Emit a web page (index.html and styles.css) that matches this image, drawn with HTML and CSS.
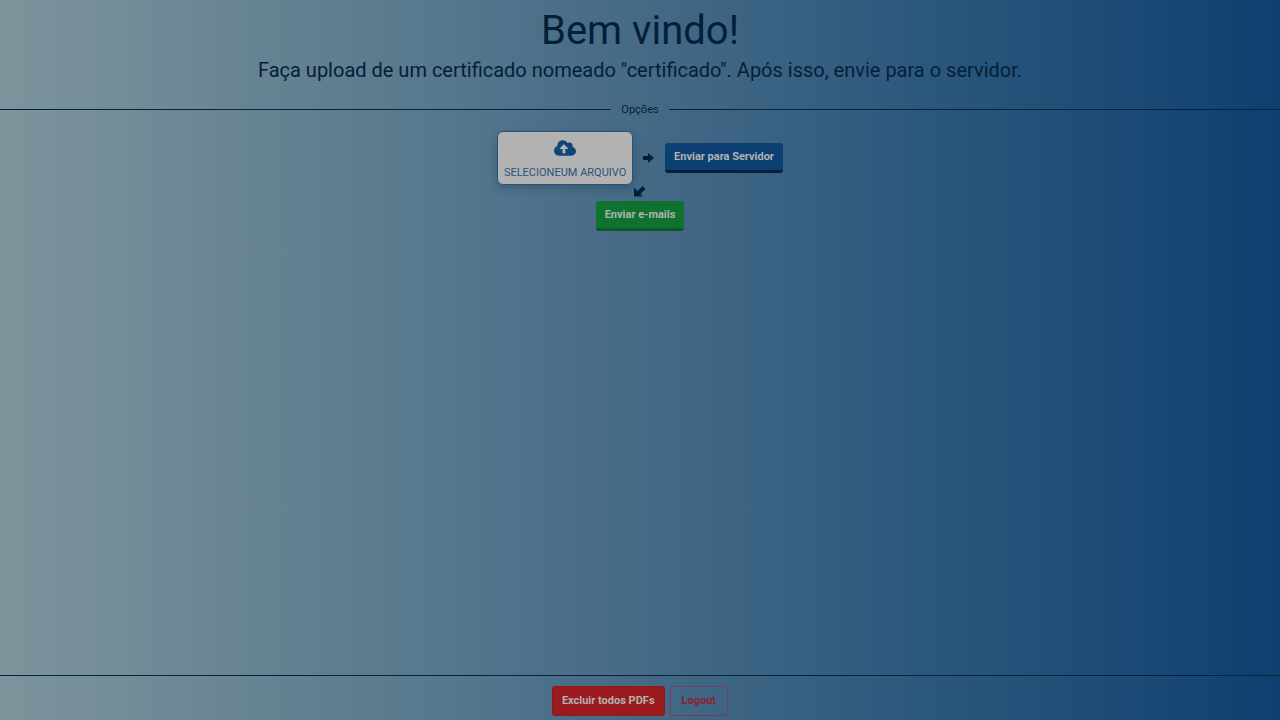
FILE: index.html
```html
<!DOCTYPE html>
<html lang="pt-BR">
<head>
<meta charset="utf-8">
<meta name="viewport" content="width=device-width, initial-scale=1">
<title>Certificados</title>
<link rel="stylesheet" href="styles.css">
</head>
<body>
<main class="content">
  <h1 class="title">Bem vindo!</h1>
  <p class="subtitle">Faça upload de um certificado nomeado "certificado". Após isso, envie para o servidor.</p>
  <div class="divider">Opções</div>
  <div class="steps">
    <label class="upload" for="arquivo">
      <svg class="cloud" viewBox="0 0 640 512" aria-hidden="true"><path fill="currentColor" fill-rule="evenodd" d="M537.600 226.600c4.100-10.700 6.400-22.400 6.400-34.600 0-53-43-96-96-96-19.700 0-38.100 6-53.300 16.200C367 64.200 315.300 32 256 32c-88.400 0-160 71.600-160 160 0 2.700.1 5.400.2 8.100C40.200 219.800 0 273.200 0 336c0 79.500 64.500 144 144 144h368c70.700 0 128-57.300 128-128 0-61.900-44-113.600-102.400-125.400zM393.400 288H328v112c0 8.800-7.200 16-16 16h-48c-8.800 0-16-7.200-16-16V288h-65.400c-14.300 0-21.400-17.200-11.300-27.300l105.400-105.400c6.200-6.200 16.400-6.200 22.600 0l105.400 105.400c10.100 10.100 2.900 27.300-11.300 27.300z"/></svg>
      <span class="upload-text">SELECIONEUM ARQUIVO</span>
      <input class="file" id="arquivo" type="file">
    </label>
    <svg class="arrow" viewBox="0 0 12 12" aria-hidden="true"><path fill="currentColor" d="M0 4h5V1l6 5-6 5V8H0z"/></svg>
    <button class="btn btn-blue" type="button">Enviar para Servidor</button>
  </div>
  <svg class="arrow arrow-down" viewBox="0 0 12 12" aria-hidden="true"><path fill="currentColor" d="M0 2.500v9h9L6.500 9l5-5-3-3-5 5z"/></svg>
  <button class="btn btn-green" type="button">Enviar e-mails</button>
</main>
<footer class="footer">
  <button class="btn btn-red" type="button">Excluir todos PDFs</button>
  <button class="btn btn-outline" type="button">Logout</button>
</footer>
</body>
</html>
```
FILE: styles.css
```css
* {
  box-sizing: border-box;
}

body {
  display: flex;
  flex-direction: column;
  min-height: 100vh;
  margin: 0;
  background: linear-gradient(90deg, #7d949c, #0d4070);
  color: #042038;
  font-family: Roboto, sans-serif;
  font-size: 11px;
}

.content {
  display: flex;
  flex: 1;
  flex-direction: column;
  align-items: center;
  padding-top: 6px;
}

.title {
  margin: 0;
  font-size: 40px;
  font-weight: 400;
  line-height: 50px;
}

.subtitle {
  margin: 0;
  font-size: 20px;
  line-height: 28px;
  text-align: center;
}

.divider {
  display: flex;
  align-items: center;
  align-self: stretch;
  gap: 10px;
  margin: 16px 0 12px;
  line-height: 19px;
}

.divider::before,
.divider::after {
  flex: 1;
  height: 1px;
  background: #062339;
  content: "";
}

.steps {
  display: flex;
  align-items: center;
  gap: 10px;
}

.upload {
  display: flex;
  flex-direction: column;
  align-items: center;
  width: 136px;
  height: 54px;
  padding-top: 5px;
  border: 1px solid #285378;
  border-radius: 6px;
  background: #b2b2b2;
  box-shadow: 0 3px 9px rgba(4, 32, 56, 0.25);
  color: #11457a;
  white-space: nowrap;
  cursor: pointer;
}

.upload:focus-within {
  outline: 2px solid #042038;
}

.cloud {
  flex: none;
  width: 22px;
  height: 22px;
}

.upload-text {
  color: #2b5278;
  line-height: 28px;
}

.file {
  position: absolute;
  width: 1px;
  height: 1px;
  overflow: hidden;
  opacity: 0;
}

.arrow {
  width: 12px;
  height: 12px;
}

.arrow-down {
  margin-bottom: 4px;
}

.btn {
  height: 30px;
  padding: 0 9px;
  border: 1px solid transparent;
  border-radius: 3px;
  color: #b2b2b2;
  font: 700 11px/26px Roboto, sans-serif;
  cursor: pointer;
}

.btn-blue {
  border-width: 0 0 3px;
  border-color: #04203c;
  background: #0c4072;
}

.btn-green {
  border-width: 0 0 3px;
  border-color: #0c5928;
  background: #10722f;
}

.btn-red {
  border-color: #8b1a1d;
  background: #9b1b1e;
}

.btn-outline {
  padding: 0 11px;
  border-color: #743f58;
  background: transparent;
  color: #8c1e35;
}

.footer {
  display: flex;
  align-items: center;
  justify-content: center;
  gap: 5px;
  padding: 10px 0 4px;
  border-top: 1px solid #062339;
}
```
